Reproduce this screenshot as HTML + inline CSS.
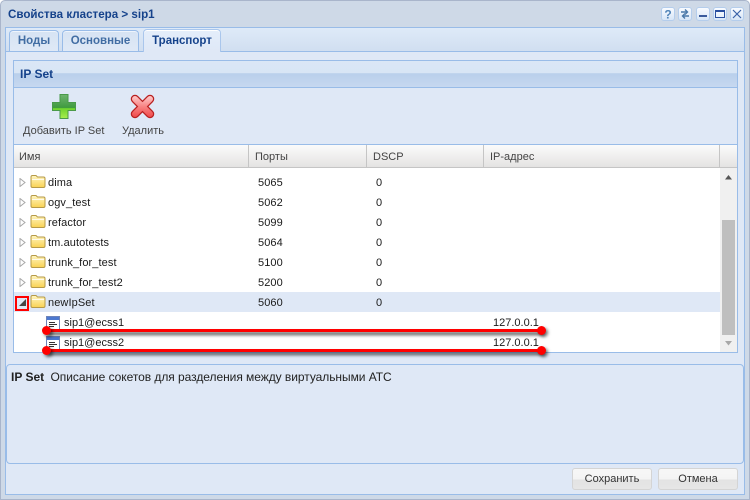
<!DOCTYPE html>
<html><head><meta charset="utf-8">
<style>
*{box-sizing:border-box}
html,body{margin:0;padding:0;width:750px;height:500px;overflow:hidden;background:#fff}
body{font-family:"Liberation Sans","DejaVu Sans",sans-serif;font-size:11px;color:#333;position:relative}
.a{position:absolute}
.t{position:absolute;white-space:nowrap;line-height:14px}
#win{left:0;top:0;width:750px;height:500px;background:#ced9e7;border:1px solid #a9b5cb;border-radius:5px 5px 0 0}
#body{left:5px;top:27px;width:740px;height:468px;background:#dfe8f6;border:1px solid #99bce8}
.tab{position:absolute;border:1px solid #99bce8;border-bottom:0;border-radius:4px 4px 0 0;background:linear-gradient(#d6e3f3,#dfe9f6);box-shadow:inset 0 1px 0 #eef4fc;font-weight:bold;font-size:11.5px;color:#416da3;text-align:center;line-height:21px}
.ws{position:absolute;top:7px;width:14px;height:14px;background:linear-gradient(#f8fbff,#d6e5f7);border:1px solid #b4cdec;border-radius:3px}
.r{color:#1a1a1a;letter-spacing:.1px}
.arr{position:absolute;left:19px;width:7px;height:9px}
.fold{position:absolute;left:30px;width:16px;height:13px}
.line{position:absolute;height:3px;background:#f00;box-shadow:2px 3px 3px rgba(0,0,0,.7)}
.dot{position:absolute;width:9px;height:9px;border-radius:50%;background:#f00;box-shadow:2px 2px 3px rgba(0,0,0,.55)}
.hs{position:absolute;top:145px;width:1px;height:22px;background:#c5c5c5}
.btn{position:absolute;top:468px;width:80px;height:22px;border:1px solid #d4d4d4;border-radius:3px;background:linear-gradient(#f7f7f7 0,#f4f4f4 50%,#e3e3e3 55%,#e6e6e6 100%);text-align:center;line-height:20px;color:#333;font-size:11px}
</style></head><body>
<svg width="0" height="0" style="position:absolute"><defs>
<linearGradient id="fg" x1="0" y1="0" x2="0" y2="1"><stop offset="0" stop-color="#fff6c4"/><stop offset="1" stop-color="#f9d253"/></linearGradient>
<linearGradient id="gg" x1="0" y1="0" x2="0" y2="1"><stop offset="0" stop-color="#6fb46f"/><stop offset=".55" stop-color="#3f9a3f"/><stop offset=".58" stop-color="#6fd32e"/><stop offset="1" stop-color="#a8ee50"/></linearGradient>
<linearGradient id="rg" gradientUnits="userSpaceOnUse" x1="0" y1="1" x2="0" y2="23"><stop offset="0" stop-color="#ffd0d0"/><stop offset=".55" stop-color="#f88080"/><stop offset="1" stop-color="#f04c4c"/></linearGradient>
<symbol id="folder" viewBox="0 0 16 13"><path d="M1 3V2Q1 .5 2.500 .5h3.500L7.500 2h6Q15 2 15 3.500V11q0 1.500-1.500 1.500h-11Q1 12.500 1 11V3z" fill="url(#fg)" stroke="#b69a48"/><path d="M2 4.500h12" stroke="#fff" stroke-opacity=".8"/></symbol>
<symbol id="tri" viewBox="0 0 7 9"><path d="M1 .5 6 4.500 1 8.500z" fill="#fff" stroke="#a8a8a8"/></symbol>
<symbol id="leaf" viewBox="0 0 14 14"><rect x=".5" y=".5" width="13" height="13" fill="#fff" stroke="#6d83b8"/><rect x="1" y="1" width="12" height="3" fill="#4c78d0"/><path d="M3 6.500h6M3 8.500h8M3 10.500h5" stroke="#333"/></symbol>
</defs></svg>

<div class="a" id="win"></div>
<div class="t" style="left:8px;top:8px;font-weight:bold;font-size:11.6px;color:#15428b">Свойства кластера &gt; sip1</div>
<div class="ws" style="left:661px"><svg width="12" height="12" style="display:block"><text x="6" y="10.500" text-anchor="middle" font-family="Liberation Sans" font-size="12" font-weight="bold" fill="#4f83b8">?</text></svg></div>
<div class="ws" style="left:678px"><svg width="12" height="12" style="display:block"><path d="M2 4h6M6 1.500 8.500 4 6 6.500M10 8H4M6 5.500 3.500 8 6 10.500" fill="none" stroke="#4a78a8" stroke-width="1.400"/></svg></div>
<div class="ws" style="left:696px"><svg width="12" height="12" style="display:block"><rect x="2" y="7" width="8" height="2" fill="#3a5a9c"/></svg></div>
<div class="ws" style="left:713px"><svg width="12" height="12" style="display:block"><rect x="1.500" y="2.500" width="9" height="7" fill="#fff" fill-opacity=".3" stroke="#2a4fa0"/><rect x="1" y="2" width="10" height="2" fill="#2a4fa0"/></svg></div>
<div class="ws" style="left:730px"><svg width="12" height="12" style="display:block"><path d="M2 2l8 8M10 2l-8 8" stroke="#3a62a8" stroke-width="1.200"/></svg></div>

<div class="a" id="body"></div>
<div class="a" style="left:6px;top:28px;width:738px;height:24px;background:linear-gradient(#deeaf8,#d0def0)"></div>
<div class="a" style="left:5px;top:51px;width:740px;height:1px;background:#99bce8"></div>
<div class="tab" style="left:9px;top:30px;width:50px;height:21px">Ноды</div>
<div class="tab" style="left:62px;top:30px;width:77px;height:21px">Основные</div>
<div class="tab" style="left:143px;top:29px;width:78px;height:23px;background:linear-gradient(#e4eefb,#dfe8f6);color:#15428b;line-height:23px;border-color:#a9c6ec;box-shadow:inset 0 1px 0 #fff">Транспорт</div>

<div class="a" style="left:13px;top:60px;width:725px;height:293px;border:1px solid #99bce8;background:#fff"></div>
<div class="a" style="left:14px;top:61px;width:723px;height:26px;background:linear-gradient(#dae7f6 0,#d8e5f5 46%,#b9cfeb 48%,#c6d8f0 100%)"></div>
<div class="a" style="left:14px;top:87px;width:723px;height:1px;background:#99bce8"></div>
<div class="t" style="left:20px;top:67px;font-weight:bold;font-size:12px;color:#15428b">IP Set</div>
<div class="a" style="left:14px;top:88px;width:723px;height:56px;background:#dfe8f6"></div>
<div class="a" style="left:14px;top:144px;width:723px;height:1px;background:#99bce8"></div>

<svg class="a" style="left:52px;top:94px" width="24" height="25"><path d="M8 .5h8v8h7.500v8H16v8H8v-8H.5v-8H8z" fill="url(#gg)" stroke="#4a9a4a"/></svg>
<svg class="a" style="left:130px;top:94px" width="25" height="25"><path d="M5 5 20 20M20 5 5 20" stroke="#b82020" stroke-width="8.500" stroke-linecap="round" fill="none"/><path d="M5 5 20 20M20 5 5 20" stroke="url(#rg)" stroke-width="6" stroke-linecap="round" fill="none"/></svg>
<div class="t" style="left:23px;top:124px;color:#444">Добавить IP Set</div>
<div class="t" style="left:122px;top:124px;color:#444">Удалить</div>

<div class="a" style="left:14px;top:145px;width:723px;height:22px;background:linear-gradient(#fbfbfb,#e4e3e2)"></div>
<div class="a" style="left:14px;top:167px;width:723px;height:1px;background:#c5c5c5"></div>
<div class="hs" style="left:248px"></div><div class="hs" style="left:366px"></div><div class="hs" style="left:483px"></div><div class="hs" style="left:719px"></div>
<div class="t" style="left:19px;top:150px;color:#444">Имя</div>
<div class="t" style="left:255px;top:150px;color:#444">Порты</div>
<div class="t" style="left:373px;top:150px;color:#444">DSCP</div>
<div class="t" style="left:490px;top:150px;color:#444">IP-адрес</div>

<div class="a" style="left:14px;top:292px;width:706px;height:20px;background:#dfe8f6"></div>

<svg class="arr" style="top:178px"><use href="#tri"/></svg><svg class="fold" style="top:175px"><use href="#folder"/></svg>
<div class="t r" style="left:48px;top:176px">dima</div><div class="t r" style="left:258px;top:176px">5065</div><div class="t r" style="left:376px;top:176px">0</div>
<svg class="arr" style="top:198px"><use href="#tri"/></svg><svg class="fold" style="top:195px"><use href="#folder"/></svg>
<div class="t r" style="left:48px;top:196px">ogv_test</div><div class="t r" style="left:258px;top:196px">5062</div><div class="t r" style="left:376px;top:196px">0</div>
<svg class="arr" style="top:218px"><use href="#tri"/></svg><svg class="fold" style="top:215px"><use href="#folder"/></svg>
<div class="t r" style="left:48px;top:216px">refactor</div><div class="t r" style="left:258px;top:216px">5099</div><div class="t r" style="left:376px;top:216px">0</div>
<svg class="arr" style="top:238px"><use href="#tri"/></svg><svg class="fold" style="top:235px"><use href="#folder"/></svg>
<div class="t r" style="left:48px;top:236px">tm.autotests</div><div class="t r" style="left:258px;top:236px">5064</div><div class="t r" style="left:376px;top:236px">0</div>
<svg class="arr" style="top:258px"><use href="#tri"/></svg><svg class="fold" style="top:255px"><use href="#folder"/></svg>
<div class="t r" style="left:48px;top:256px">trunk_for_test</div><div class="t r" style="left:258px;top:256px">5100</div><div class="t r" style="left:376px;top:256px">0</div>
<svg class="arr" style="top:278px"><use href="#tri"/></svg><svg class="fold" style="top:275px"><use href="#folder"/></svg>
<div class="t r" style="left:48px;top:276px">trunk_for_test2</div><div class="t r" style="left:258px;top:276px">5200</div><div class="t r" style="left:376px;top:276px">0</div>

<svg class="a" style="left:15px;top:296px" width="14" height="15"><rect x="1" y="1" width="12" height="13" fill="none" stroke="#f00" stroke-width="2"/><path d="M4 10h7V3z" fill="#444"/></svg>
<svg class="fold" style="top:295px"><use href="#folder"/></svg>
<div class="t r" style="left:48px;top:296px">newIpSet</div><div class="t r" style="left:258px;top:296px">5060</div><div class="t r" style="left:376px;top:296px">0</div>

<svg class="a" style="left:46px;top:316px" width="14" height="14"><use href="#leaf"/></svg>
<div class="t r" style="left:64px;top:316px;letter-spacing:0">sip1@ecss1</div><div class="t r" style="left:493px;top:316px;letter-spacing:0">127.0.0.1</div>
<svg class="a" style="left:46px;top:336px" width="14" height="14"><use href="#leaf"/></svg>
<div class="t r" style="left:64px;top:336px;letter-spacing:0">sip1@ecss2</div><div class="t r" style="left:493px;top:336px;letter-spacing:0">127.0.0.1</div>

<div class="a" style="left:720px;top:168px;width:17px;height:184px;background:#f0f0f0"></div>
<div class="a" style="left:722px;top:220px;width:13px;height:115px;background:#bfbfbf"></div>
<svg class="a" style="left:725px;top:175px" width="7" height="5"><path d="M3.500 0 7 4.500H0z" fill="#555"/></svg>
<svg class="a" style="left:725px;top:341px" width="7" height="5"><path d="M0 0h7L3.500 4.500z" fill="#a8a8a8"/></svg>

<div class="line" style="left:46px;top:329px;width:496px"></div>
<div class="dot" style="left:42px;top:326px"></div><div class="dot" style="left:537px;top:326px"></div>
<div class="line" style="left:46px;top:349px;width:496px"></div>
<div class="dot" style="left:42px;top:346px"></div><div class="dot" style="left:537px;top:346px"></div>

<div class="a" style="left:6px;top:364px;width:738px;height:100px;border:1px solid #99bce8;border-radius:4px;background:#dfe8f6"></div>
<div class="t" style="left:11px;top:370px;font-size:12px;color:#222"><b>IP Set</b> <span style="font-size:12px;letter-spacing:-.05px;margin-left:3px">Описание сокетов для разделения между виртуальными АТС</span></div>

<div class="btn" style="left:572px">Сохранить</div>
<div class="btn" style="left:658px">Отмена</div>
</body></html>
